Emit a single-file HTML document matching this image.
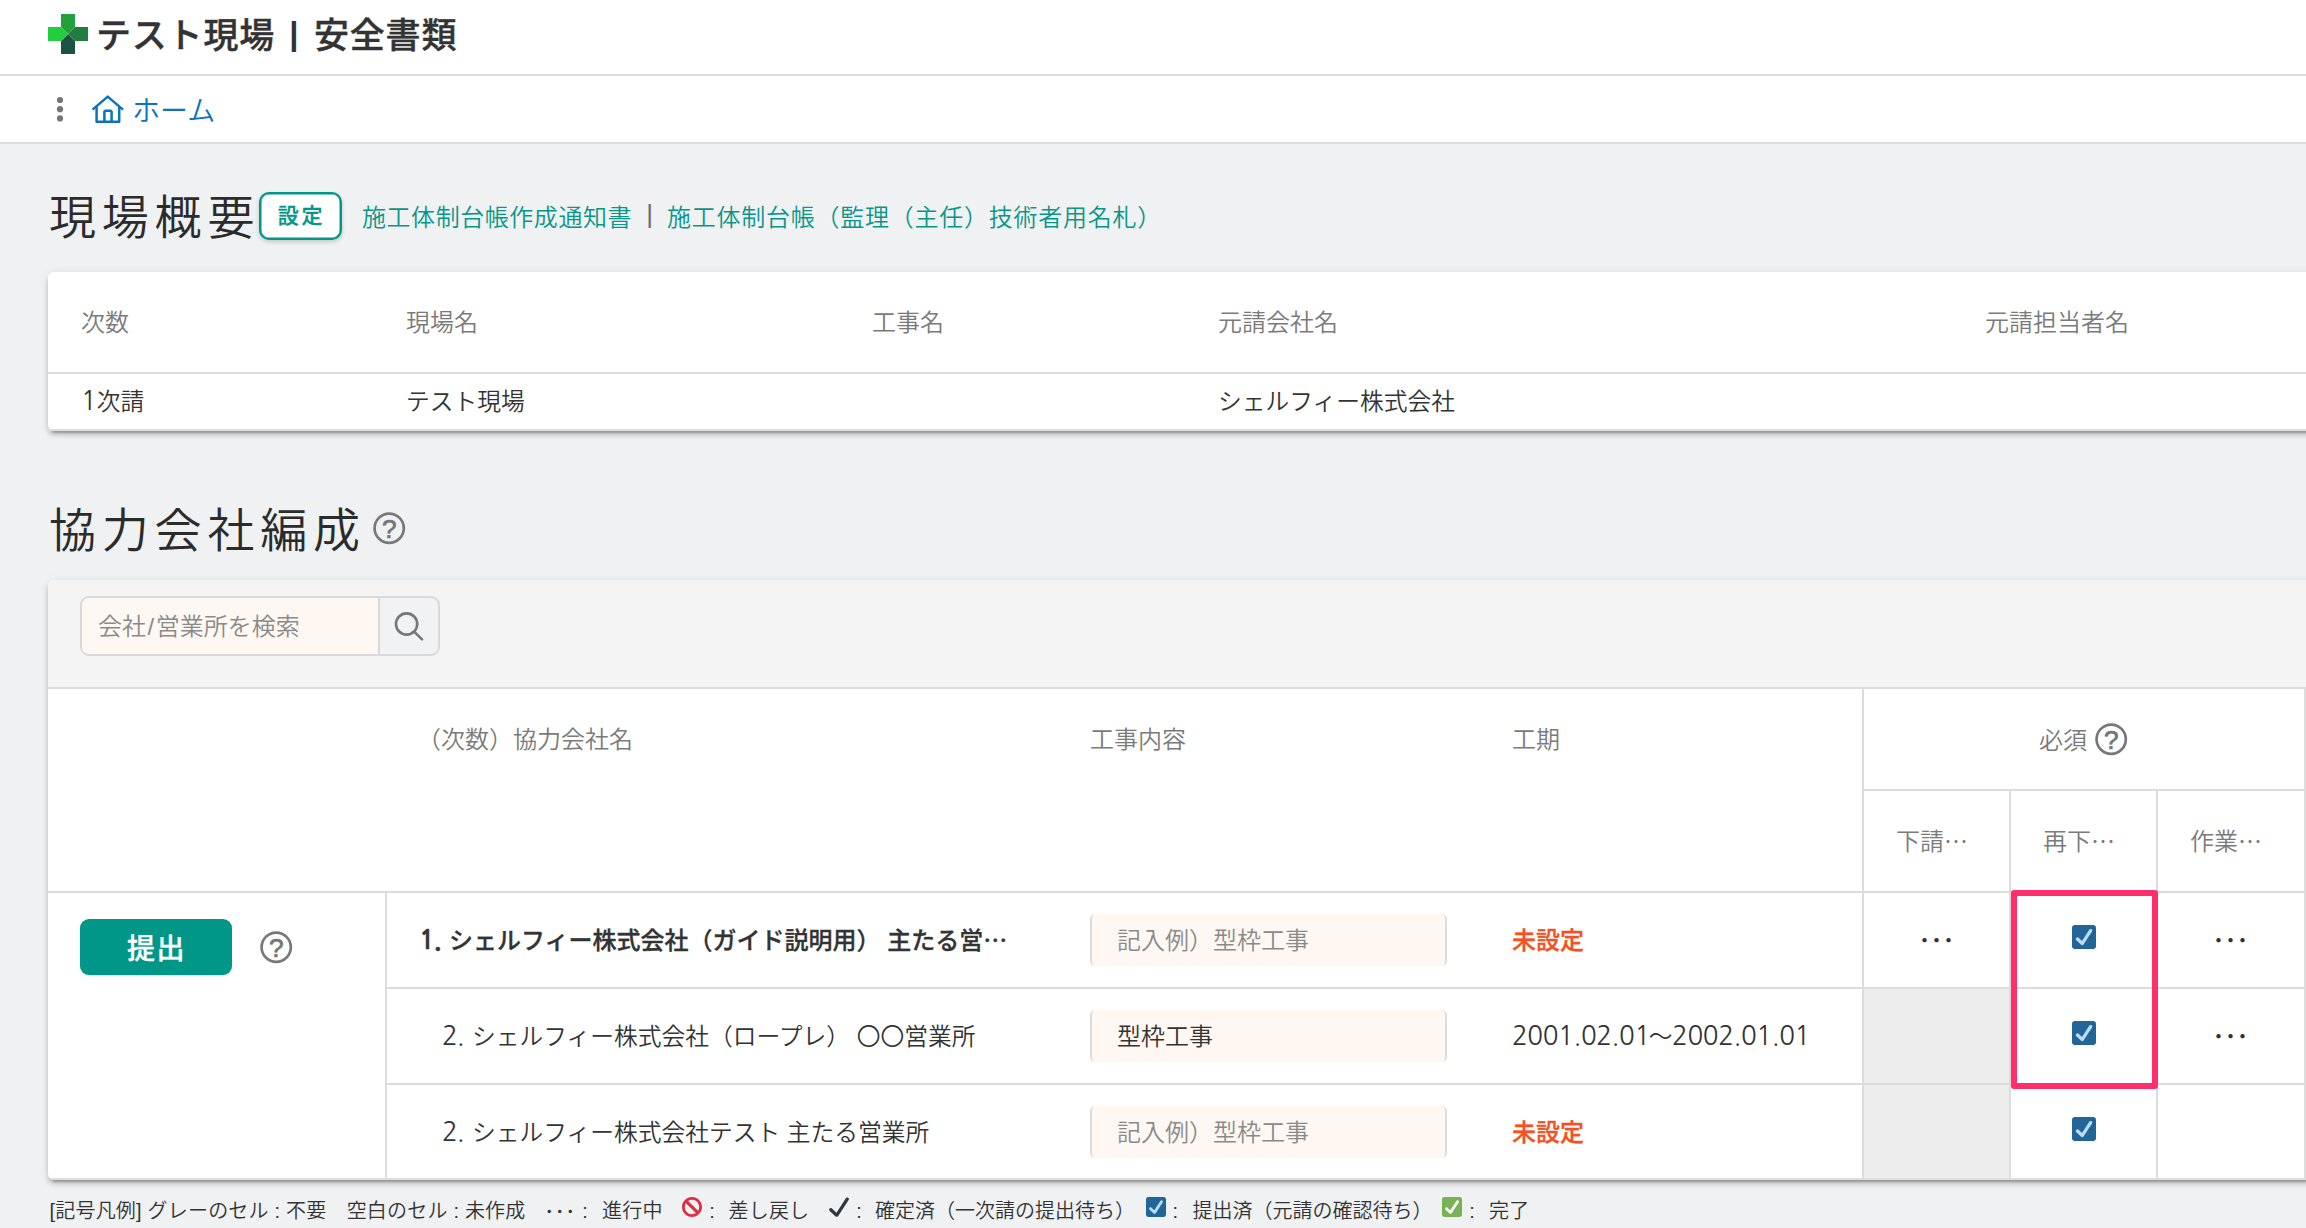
<!DOCTYPE html>
<html lang="ja">
<head>
<meta charset="utf-8">
<title>テスト現場 | 安全書類</title>
<style>
*{box-sizing:border-box;margin:0;padding:0}
html,body{width:2306px;height:1228px;overflow:hidden}
body{position:relative;background:#f0f1f3;color:#333;font-family:"Liberation Sans","Noto Sans CJK JP",sans-serif;font-size:24px;line-height:1;font-weight:350}
.jp{font-family:"Noto Sans CJK JP","Liberation Sans",sans-serif}
.abs{position:absolute;white-space:nowrap}
header{position:absolute;left:0;top:0;width:2306px;height:76px;background:#fff;border-bottom:2px solid #dcdcdc}
nav{position:absolute;left:0;top:76px;width:2306px;height:68px;background:#fff;border-bottom:2px solid #dcdcdc}
.title{left:96px;top:16px;font-size:35px;font-weight:500;-webkit-text-stroke:.4px currentColor;line-height:40px;color:#333;letter-spacing:.8px}
.title .bar{white-space:pre;font-weight:700;-webkit-text-stroke:0;display:inline-block;width:39px;text-align:center;letter-spacing:0;font-size:33px;line-height:20px;vertical-align:3.4px;position:relative;left:-.7px}
.home{left:132px;top:19.5px;font-size:28px;line-height:32px;color:#0d73bb}
h2{position:absolute;white-space:nowrap;font-weight:350;font-size:47px;line-height:56px;letter-spacing:5.8px;color:#2b2b2b}
.btn-outline{left:259px;top:192px;width:83px;height:48px;border:2px solid #009688;border-radius:10px;background:#fff;color:#009688;font-weight:500;-webkit-text-stroke:.3px currentColor;font-size:21px;line-height:44px;text-align:center;letter-spacing:2.7px;padding-left:2px;box-shadow:inset 0 0 0 .5px #009688,0 2px 4px rgba(0,0,0,.18)}
.links{left:362px;top:201.5px;font-size:24px;line-height:32px;color:#089689;letter-spacing:.55px}
.links .sep{white-space:pre;color:#6a6a6a;display:inline-block;width:35px;text-align:center;letter-spacing:0;font-size:26px;line-height:20px;vertical-align:2.5px}
.card{position:absolute;background:#fff;border-radius:6px 0 0 6px;box-shadow:0 6px 2px -4px rgba(0,0,0,.2),0 4px 4px 0 rgba(0,0,0,.14),0 2px 10px 0 rgba(0,0,0,.12)}
#card1{left:48px;top:272px;width:2300px;height:159px}
#card1 .hr{position:absolute;left:0;top:100px;width:100%;height:2px;background:#dcdcdc}
.th{color:#7a7a7a;font-size:24px;line-height:32px}
.td{color:#333;font-size:23.75px;line-height:32px}
.td.b{font-size:24px}
#card2{left:48px;top:580px;width:2300px;height:600px;overflow:hidden}
.toolbar{position:absolute;left:0;top:0;width:100%;height:109px;background:#f4f4f4;border-bottom:2px solid #dcdcdc}
.search{position:absolute;left:32px;top:16px;width:360px;height:60px;border:2px solid #d9d9d9;border-radius:9px;background:#f1f2f4;overflow:hidden}
.search .inp{position:absolute;left:0;top:0;width:298px;height:56px;background:#fff8f2;border-right:2px solid #d9d9d9;color:#8a8a8a;font-size:24px;line-height:58px;padding-left:16px}
.search .inp i{font-style:normal;letter-spacing:0;padding:0 1.5px}
.vl{position:absolute;width:2px;background:#dcdcdc}
.hl{position:absolute;height:2px;background:#dcdcdc}
.gray{position:absolute;background:#ededed}
.field{position:absolute;left:1042px;width:357px;height:52px;background:#fff8f2;border-left:2px solid #ddd;border-right:2px solid #ddd;border-radius:5px;font-size:24px;line-height:54px;padding-left:25px;color:#333;white-space:nowrap}
.field.ph{color:#8a8a8a}
.unset{color:#f4511e;font-weight:500;-webkit-text-stroke:.3px currentColor;font-size:24px;line-height:32px}
.submit{left:32px;top:339px;width:152px;height:56px;border-radius:9px;background:#009688;color:#fff;font-weight:500;-webkit-text-stroke:.35px currentColor;font-size:28px;line-height:61px;text-align:center;letter-spacing:1.5px;padding-left:1px;box-shadow:0 1px 2px rgba(0,0,0,.12)}
.dots{font-family:"Noto Sans CJK JP",sans-serif;font-size:24px;line-height:32px;color:#333;font-weight:500;width:145px;text-align:center}
.num,.n1,.date i{font-family:"NanumGothic","Liberation Sans","Noto Sans CJK JP",sans-serif;font-size:26px;font-style:normal;line-height:20px}
.num{display:inline-block;letter-spacing:-1px}
.b{font-weight:500;-webkit-text-stroke:.3px currentColor}
.b .num{font-weight:700;-webkit-text-stroke:.5px currentColor}
.date i{letter-spacing:-.4px}
.date b{font-weight:350;letter-spacing:0;margin:0 -.5px 0 -1px}
.hi{position:absolute;border:6px solid #ff2e6c;border-radius:3px}
.legend{position:absolute;left:.5px;top:1197px;width:2306px;height:32px;font-size:20px;line-height:28px;color:#333}
.legend span{top:0;letter-spacing:.2px}
svg{position:absolute;overflow:visible}
</style>
</head>
<body>
<header>
  <svg style="left:48px;top:14px" width="40" height="40" viewBox="0 0 40 40">
    <polygon points="13,0 27,0 27,13 20,20 13,13" fill="#21a03c"/>
    <polygon points="40,13 40,27 27,27 20,20 27,13" fill="#1f7d3f"/>
    <polygon points="13,40 27,40 27,27 20,20 13,27" fill="#1d5345"/>
    <polygon points="0,13 0,27 13,27 20,20 13,13" fill="#21cf3e"/>
  </svg>
  <div class="abs title">テスト現場<span class="bar"> | </span>安全書類</div>
</header>
<nav>
  <svg style="left:54px;top:18px" width="12" height="30" viewBox="0 0 12 30"><circle cx="6" cy="6" r="3.1" fill="#757575"/><circle cx="6" cy="15.2" r="3.1" fill="#757575"/><circle cx="6" cy="24.4" r="3.1" fill="#757575"/></svg>
  <svg style="left:90px;top:17px" width="36" height="32" viewBox="0 0 36 32" fill="none" stroke="#0d73bb" stroke-width="2.5" stroke-linejoin="round" stroke-linecap="butt">
    <path d="M2.6 16.6 L17.7 3.6 L33 16.6"/>
    <path d="M6.6 13.5 V28.8 H29.2 V13.5"/>
    <path d="M14.4 28.8 V19.2 Q14.4 17.8 15.8 17.8 H20.2 Q21.6 17.8 21.6 19.2 V28.8"/>
  </svg>
  <div class="abs home">ホーム</div>
</nav>

<h2 style="left:49px;top:190px">現場概要</h2>
<div class="abs btn-outline">設定</div>
<div class="abs links">施工体制台帳作成通知書<span class="sep"> | </span><span style="letter-spacing:.75px">施工体制台帳（監理（主任）技術者用名札）</span></div>

<section class="card" id="card1">
  <div class="abs th" style="left:33px;top:35px">次数</div>
  <div class="abs th" style="left:358px;top:35px">現場名</div>
  <div class="abs th" style="left:824px;top:35px">工事名</div>
  <div class="abs th" style="left:1170px;top:35px">元請会社名</div>
  <div class="abs th" style="left:1937px;top:35px">元請担当者名</div>
  <div class="hr"></div>
  <div class="hr" style="top:157px;background:#dedede"></div>
  <div class="abs td" style="left:33px;top:114px"><span class="n1">1</span>次請</div>
  <div class="abs td" style="left:358px;top:114px">テスト現場</div>
  <div class="abs td" style="left:1170px;top:114px">シェルフィー株式会社</div>
</section>

<h2 style="left:49px;top:503px">協力会社編成</h2>
<svg class="help" style="left:369.8px;top:508.8px" width="38.4" height="38.4" viewBox="0 0 24 24"><circle cx="12" cy="12" r="9.150" fill="none" stroke="#787878" stroke-width="1.700"/><text x="12" y="17.900" font-size="16.400" text-anchor="middle" font-family="Liberation Sans, sans-serif" fill="#757575" stroke="#757575" stroke-width=".450">?</text></svg>

<section class="card" id="card2">
  <div class="toolbar">
    <div class="search">
      <div class="inp">会社<i>/</i>営業所を検索</div>
      <svg style="left:310px;top:12px" width="34" height="34" viewBox="0 0 34 34" fill="none" stroke="#777" stroke-width="2.6" stroke-linecap="round"><circle cx="14.6" cy="14" r="10.6"/><path d="M22.4 21.8 L30 29.4"/></svg>
    </div>
  </div>
  <!-- grid lines -->
  <div class="gray" style="left:1816px;top:409px;width:145px;height:191px"></div>
  <div class="vl" style="left:1814px;top:109px;height:491px"></div>
  <div class="vl" style="left:1961px;top:211px;height:389px"></div>
  <div class="vl" style="left:2108px;top:211px;height:389px"></div>
  <div class="vl" style="left:2256px;top:109px;height:491px"></div>
  <div class="vl" style="left:337px;top:311px;height:289px"></div>
  <div class="hl" style="left:1814px;top:209px;width:444px"></div>
  <div class="hl" style="left:0;top:311px;width:2300px"></div>
  <div class="hl" style="left:337px;top:407px;width:1963px"></div>
  <div class="hl" style="left:337px;top:503px;width:1963px"></div>

  <div class="hl" style="left:0;top:598px;width:2300px;background:#dedede"></div>

  <!-- header -->
  <div class="abs th" style="left:369px;top:144px">（次数）協力会社名</div>
  <div class="abs th" style="left:1042px;top:144px">工事内容</div>
  <div class="abs th" style="left:1464px;top:144px">工期</div>
  <div class="abs th" style="left:1991px;top:144.5px">必須</div>
  <svg class="help" style="left:2043.8px;top:139.8px" width="38.4" height="38.4" viewBox="0 0 24 24"><circle cx="12" cy="12" r="9.150" fill="none" stroke="#787878" stroke-width="1.700"/><text x="12" y="17.900" font-size="16.400" text-anchor="middle" font-family="Liberation Sans, sans-serif" fill="#757575" stroke="#757575" stroke-width=".450">?</text></svg>
  <div class="abs th" style="left:1848px;top:243.5px">下請<span class="jp">…</span></div>
  <div class="abs th" style="left:1995px;top:243.5px">再下<span class="jp">…</span></div>
  <div class="abs th" style="left:2142px;top:243.5px">作業<span class="jp">…</span></div>

  <!-- row 1 -->
  <div class="abs submit">提出</div>
  <svg class="help" style="left:208.8px;top:347.8px" width="38.4" height="38.4" viewBox="0 0 24 24"><circle cx="12" cy="12" r="9.150" fill="none" stroke="#787878" stroke-width="1.700"/><text x="12" y="17.900" font-size="16.400" text-anchor="middle" font-family="Liberation Sans, sans-serif" fill="#757575" stroke="#757575" stroke-width=".450">?</text></svg>
  <div class="abs td b" style="left:371px;top:343px"><span class="num" style="width:30px">1.</span>シェルフィー株式会社（ガイド説明用） 主たる営<span class="jp">…</span></div>
  <div class="field ph" style="top:334px">記入例）型枠工事</div>
  <div class="abs unset" style="left:1464px;top:345px">未設定</div>
  <div class="abs dots" style="left:1816px;top:343px">･･･</div>
  <div class="abs dots" style="left:2110px;top:343px">･･･</div>

  <!-- row 2 -->
  <div class="abs td" style="left:394px;top:441px"><span class="num" style="width:30px">2.</span>シェルフィー株式会社（ロープレ） 〇〇営業所</div>
  <div class="field" style="top:430px">型枠工事</div>
  <div class="abs td date" style="left:1464px;top:441px"><i>2001.02.01</i><b>〜</b><i>2002.01.01</i></div>
  <div class="abs dots" style="left:2110px;top:439px">･･･</div>

  <!-- row 3 -->
  <div class="abs td" style="left:394px;top:537px"><span class="num" style="width:30px">2.</span>シェルフィー株式会社テスト 主たる営業所</div>
  <div class="field ph" style="top:526px">記入例）型枠工事</div>
  <div class="abs unset" style="left:1464px;top:537px">未設定</div>

  <!-- checkboxes -->
  <svg style="left:2024px;top:345px" width="24" height="24" viewBox="0 0 36 36"><path fill="#226699" d="M36 32c0 2.209-1.791 4-4 4H4c-2.209 0-4-1.791-4-4V4c0-2.209 1.791-4 4-4h28c2.209 0 4 1.791 4 4v28z"/><path fill="#bbddf5" d="M29.28 6.362c-1.156-.751-2.704-.422-3.458.736L14.936 23.877l-5.029-4.65c-1.014-.938-2.596-.875-3.533.138-.937 1.014-.875 2.596.139 3.533l7.209 6.666c.48.445 1.09.665 1.696.665.673 0 1.534-.282 2.099-1.139.332-.506 12.5-19.27 12.5-19.27.751-1.159.421-2.707-.737-3.458z"/></svg>
  <svg style="left:2024px;top:441px" width="24" height="24" viewBox="0 0 36 36"><path fill="#226699" d="M36 32c0 2.209-1.791 4-4 4H4c-2.209 0-4-1.791-4-4V4c0-2.209 1.791-4 4-4h28c2.209 0 4 1.791 4 4v28z"/><path fill="#bbddf5" d="M29.28 6.362c-1.156-.751-2.704-.422-3.458.736L14.936 23.877l-5.029-4.65c-1.014-.938-2.596-.875-3.533.138-.937 1.014-.875 2.596.139 3.533l7.209 6.666c.48.445 1.09.665 1.696.665.673 0 1.534-.282 2.099-1.139.332-.506 12.5-19.27 12.5-19.27.751-1.159.421-2.707-.737-3.458z"/></svg>
  <svg style="left:2024px;top:537px" width="24" height="24" viewBox="0 0 36 36"><path fill="#226699" d="M36 32c0 2.209-1.791 4-4 4H4c-2.209 0-4-1.791-4-4V4c0-2.209 1.791-4 4-4h28c2.209 0 4 1.791 4 4v28z"/><path fill="#bbddf5" d="M29.28 6.362c-1.156-.751-2.704-.422-3.458.736L14.936 23.877l-5.029-4.65c-1.014-.938-2.596-.875-3.533.138-.937 1.014-.875 2.596.139 3.533l7.209 6.666c.48.445 1.09.665 1.696.665.673 0 1.534-.282 2.099-1.139.332-.506 12.5-19.27 12.5-19.27.751-1.159.421-2.707-.737-3.458z"/></svg>
  <div class="hi" style="left:1963px;top:310px;width:147px;height:199px"></div>
</section>

<footer class="legend">
  <span class="abs" style="left:49px">[記号凡例] グレーのセル : 不要　空白のセル : 未作成</span>
  <span class="abs jp" style="left:543.7px;letter-spacing:.5px">･･･</span>
  <span class="abs" style="left:581.8px">:</span>
  <span class="abs" style="left:601.5px">進行中</span>
  <svg style="left:681px;top:0px" width="20" height="20" viewBox="0 0 36 36"><path fill="#dd2e44" d="M18 0C8.059 0 0 8.059 0 18s8.059 18 18 18 18-8.059 18-18S27.941 0 18 0zm13 18c0 2.565-.753 4.950-2.035 6.965L11.036 7.036C13.050 5.753 15.435 5 18 5c7.180 0 13 5.821 13 13zM5 18c0-2.565.753-4.950 2.036-6.964l17.929 17.929C22.950 30.247 20.565 31 18 31c-7.179 0-13-5.820-13-13z"/></svg>
  <span class="abs" style="left:708.7px">:</span>
  <span class="abs" style="left:728px">差し戻し</span>
  <svg style="left:828px;top:0px" width="20" height="20" viewBox="0 0 36 36"><path fill="#31373d" d="M34.459 1.375c-1.391-.902-3.248-.506-4.149.884L13.500 28.170l-8.198-7.580c-1.217-1.125-3.114-1.051-4.239.166-1.125 1.216-1.051 3.115.166 4.239l10.764 9.952s.309.266.452.359c.504.328 1.070.484 1.630.484.982 0 1.945-.482 2.520-1.368L35.343 5.524c.902-1.390.506-3.248-.884-4.149z"/></svg>
  <span class="abs" style="left:855.8px">:</span>
  <span class="abs" style="left:874.5px;letter-spacing:0">確定済（一次請の提出待ち）</span>
  <svg style="left:1145px;top:-.5px" width="20" height="20" viewBox="0 0 36 36"><path fill="#226699" d="M36 32c0 2.209-1.791 4-4 4H4c-2.209 0-4-1.791-4-4V4c0-2.209 1.791-4 4-4h28c2.209 0 4 1.791 4 4v28z"/><path fill="#bbddf5" d="M29.28 6.362c-1.156-.751-2.704-.422-3.458.736L14.936 23.877l-5.029-4.65c-1.014-.938-2.596-.875-3.533.138-.937 1.014-.875 2.596.139 3.533l7.209 6.666c.48.445 1.09.665 1.696.665.673 0 1.534-.282 2.099-1.139.332-.506 12.5-19.27 12.5-19.27.751-1.159.421-2.707-.737-3.458z"/></svg>
  <span class="abs" style="left:1172.1px">:</span>
  <span class="abs" style="left:1192px;letter-spacing:0">提出済（元請の確認待ち）</span>
  <svg style="left:1441px;top:-.5px" width="20" height="20" viewBox="0 0 36 36"><path fill="#77b255" d="M36 32c0 2.209-1.791 4-4 4H4c-2.209 0-4-1.791-4-4V4c0-2.209 1.791-4 4-4h28c2.209 0 4 1.791 4 4v28z"/><path fill="#fff" d="M29.28 6.362c-1.156-.751-2.704-.422-3.458.736L14.936 23.877l-5.029-4.65c-1.014-.938-2.596-.875-3.533.138-.937 1.014-.875 2.596.139 3.533l7.209 6.666c.48.445 1.09.665 1.696.665.673 0 1.534-.282 2.099-1.139.332-.506 12.5-19.27 12.5-19.27.751-1.159.421-2.707-.737-3.458z"/></svg>
  <span class="abs" style="left:1468.7px">:</span>
  <span class="abs" style="left:1488.5px">完了</span>
</footer>
</body>
</html>
